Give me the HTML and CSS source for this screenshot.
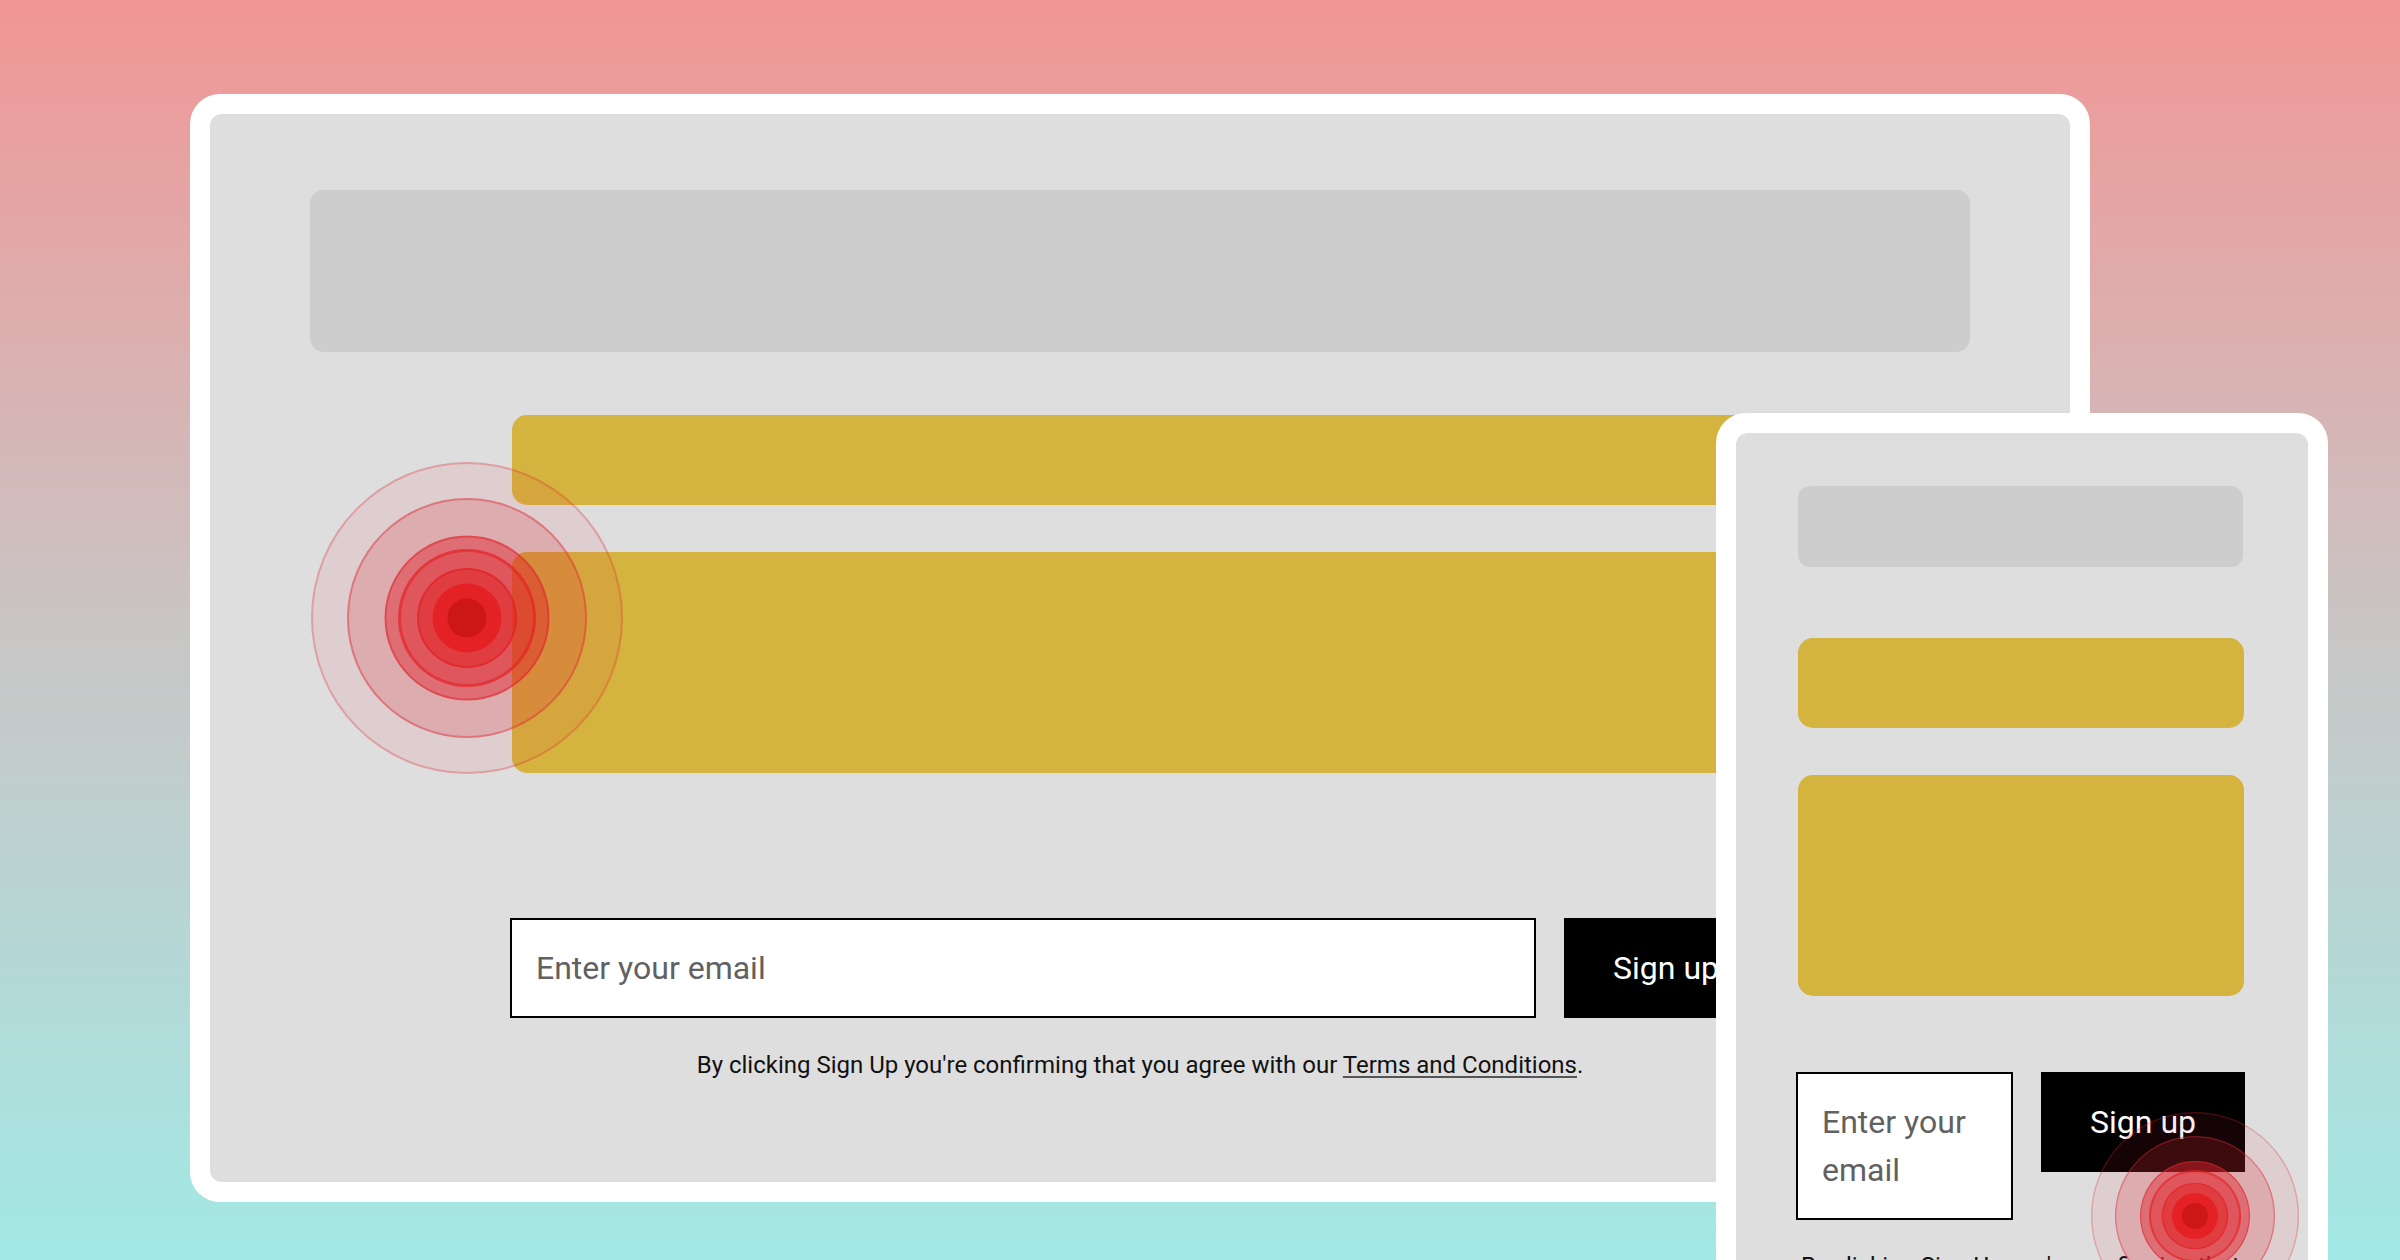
FILE: index.html
```html
<!DOCTYPE html>
<html lang="en">
<head>
<meta charset="utf-8">
<title>Sign up form – responsive preview</title>
<link rel="stylesheet" href="styles.css">
</head>
<body>
<main class="stage">
  <section class="device device-desktop">
    <div class="screen screen-desktop">
      <div class="ph ph-header-lg"></div>
      <div class="content content-lg">
        <div class="ph ph-yellow ph-title"></div>
        <div class="ph ph-yellow ph-body"></div>
        <form class="signup signup-lg">
          <label class="field"><span class="placeholder">Enter your email</span></label>
          <button type="button" class="btn">Sign up</button>
        </form>
        <p class="terms terms-lg">By clicking Sign Up you're confirming that you agree with our <a href="#">Terms and Conditions</a>.</p>
      </div>
    </div>
    <div class="pulse pulse-lg" aria-hidden="true">
      <span class="ring r1"></span><span class="ring r2"></span><span class="ring r3"></span><span class="ring r4"></span><span class="ring r5"></span><span class="ring r6"></span><span class="ring r7"></span>
    </div>
  </section>

  <section class="device device-mobile">
    <div class="screen screen-mobile">
      <div class="ph ph-header-sm"></div>
      <div class="ph ph-yellow ph-title ph-title-sm"></div>
      <div class="ph ph-yellow ph-body"></div>
      <form class="signup signup-sm">
        <label class="field"><span class="placeholder">Enter your email</span></label>
        <button type="button" class="btn">Sign up</button>
      </form>
      <p class="terms terms-sm">By clicking Sign Up you're confirming that you agree with our <a href="#">Terms and Conditions</a>.</p>
    </div>
    <div class="pulse pulse-sm" aria-hidden="true">
      <span class="ring r1"></span><span class="ring r2"></span><span class="ring r3"></span><span class="ring r4"></span><span class="ring r5"></span><span class="ring r6"></span><span class="ring r7"></span>
    </div>
  </section>
</main>
</body>
</html>
```

FILE: styles.css
```css
* { box-sizing: border-box; }

html, body {
  margin: 0;
  padding: 0;
  width: 2400px;
  height: 1260px;
  overflow: hidden;
}

body {
  background: linear-gradient(180deg, #f19695 0%, #c9c5c5 50%, #a2e9e5 100%);
  font-family: Roboto, "Liberation Sans", Arial, sans-serif;
  color: #111;
}

.stage {
  position: relative;
  width: 2400px;
  height: 1260px;
  padding: 94px 0 0 190px;
}

/* device frames */
.device {
  background: #fff;
  border-radius: 30px;
  padding: 20px;
}

.device-desktop {
  position: relative;
  width: 1900px;
  height: 1108px;
}

.device-mobile {
  position: absolute;
  left: 1716px;
  top: 413px;
  width: 612px;
  height: 1100px;
}

.screen {
  background: #dedede;
  border-radius: 12px;
  height: 100%;
  overflow: hidden;
}

.screen-desktop {
  padding: 76px 100px 0;
}

.screen-mobile {
  padding: 53px 63px 0 60px;
}

/* placeholders */
.ph {
  border-radius: 14px;
}

.ph-header-lg {
  height: 162px;
  background: #cdcdcd;
}

.ph-header-sm {
  height: 81px;
  margin: 0 2px;
  background: #cdcdcd;
  border-radius: 12px;
}

.ph-yellow {
  background: #d5b33f;
  border-radius: 15px;
}

.ph-title { height: 90px; }
.ph-title-sm { margin-top: 71px; }

.ph-body {
  height: 221px;
  margin-top: 47px;
}

.screen-mobile .ph-yellow { margin-left: 2px; margin-right: 1px; }

.content-lg {
  width: 1256px;
  margin: 63px auto 0;
}

/* form */
.signup {
  display: flex;
  align-items: flex-start;
  gap: 28px;
}

.signup-lg { margin: 145px 0 0 -2px; }
.signup-sm { margin-top: 76px; }

.field {
  flex: 1;
  display: block;
  background: #fff;
  border: 2px solid #000;
  padding: 24px 24px;
  font-size: 32px;
  line-height: 48px;
  color: #616161;
}

.btn {
  flex: none;
  background: #000;
  color: #fff;
  border: 0;
  border-radius: 0;
  padding: 26px 49px;
  font-family: Roboto, "Liberation Sans", Arial, sans-serif;
  font-size: 32px;
  line-height: 48px;
}

.terms {
  margin: 29px 0 0;
  font-size: 24px;
  line-height: 36px;
  text-align: center;
  color: #111;
}

.terms a {
  color: #111;
  text-decoration: underline;
  text-decoration-color: #555;
  text-underline-offset: 3px;
}

.terms-sm { margin-top: 28px; }

/* pulse markers */
.pulse {
  position: absolute;
  width: 0;
  height: 0;
}

.pulse-lg { left: 277px; top: 524px; }
.pulse-sm { left: 479px; top: 803px; transform: scale(0.667); }

.ring {
  position: absolute;
  border-radius: 50%;
  transform: translate(-50%, -50%);
  left: 0;
  top: 0;
}

.r1 { width: 312px; height: 312px; background: rgba(222, 40, 52, 0.09); border: 2px solid rgba(222, 40, 52, 0.28); }
.r2 { width: 240px; height: 240px; background: rgba(222, 40, 52, 0.2); border: 2px solid rgba(222, 40, 52, 0.42); }
.r3 { width: 165px; height: 165px; background: rgba(224, 36, 44, 0.45); border: 2px solid rgba(224, 36, 44, 0.5); }
.r4 { width: 138px; height: 138px; background: rgba(226, 32, 38, 0.3); border: 3px solid rgba(226, 32, 38, 0.6); }
.r5 { width: 100px; height: 100px; background: rgba(226, 30, 34, 0.45); border: 2px solid rgba(226, 30, 34, 0.55); }
.r6 { width: 69px; height: 69px; background: rgba(228, 28, 32, 0.85); }
.r7 { width: 39px; height: 39px; background: #cd1616; }
```
